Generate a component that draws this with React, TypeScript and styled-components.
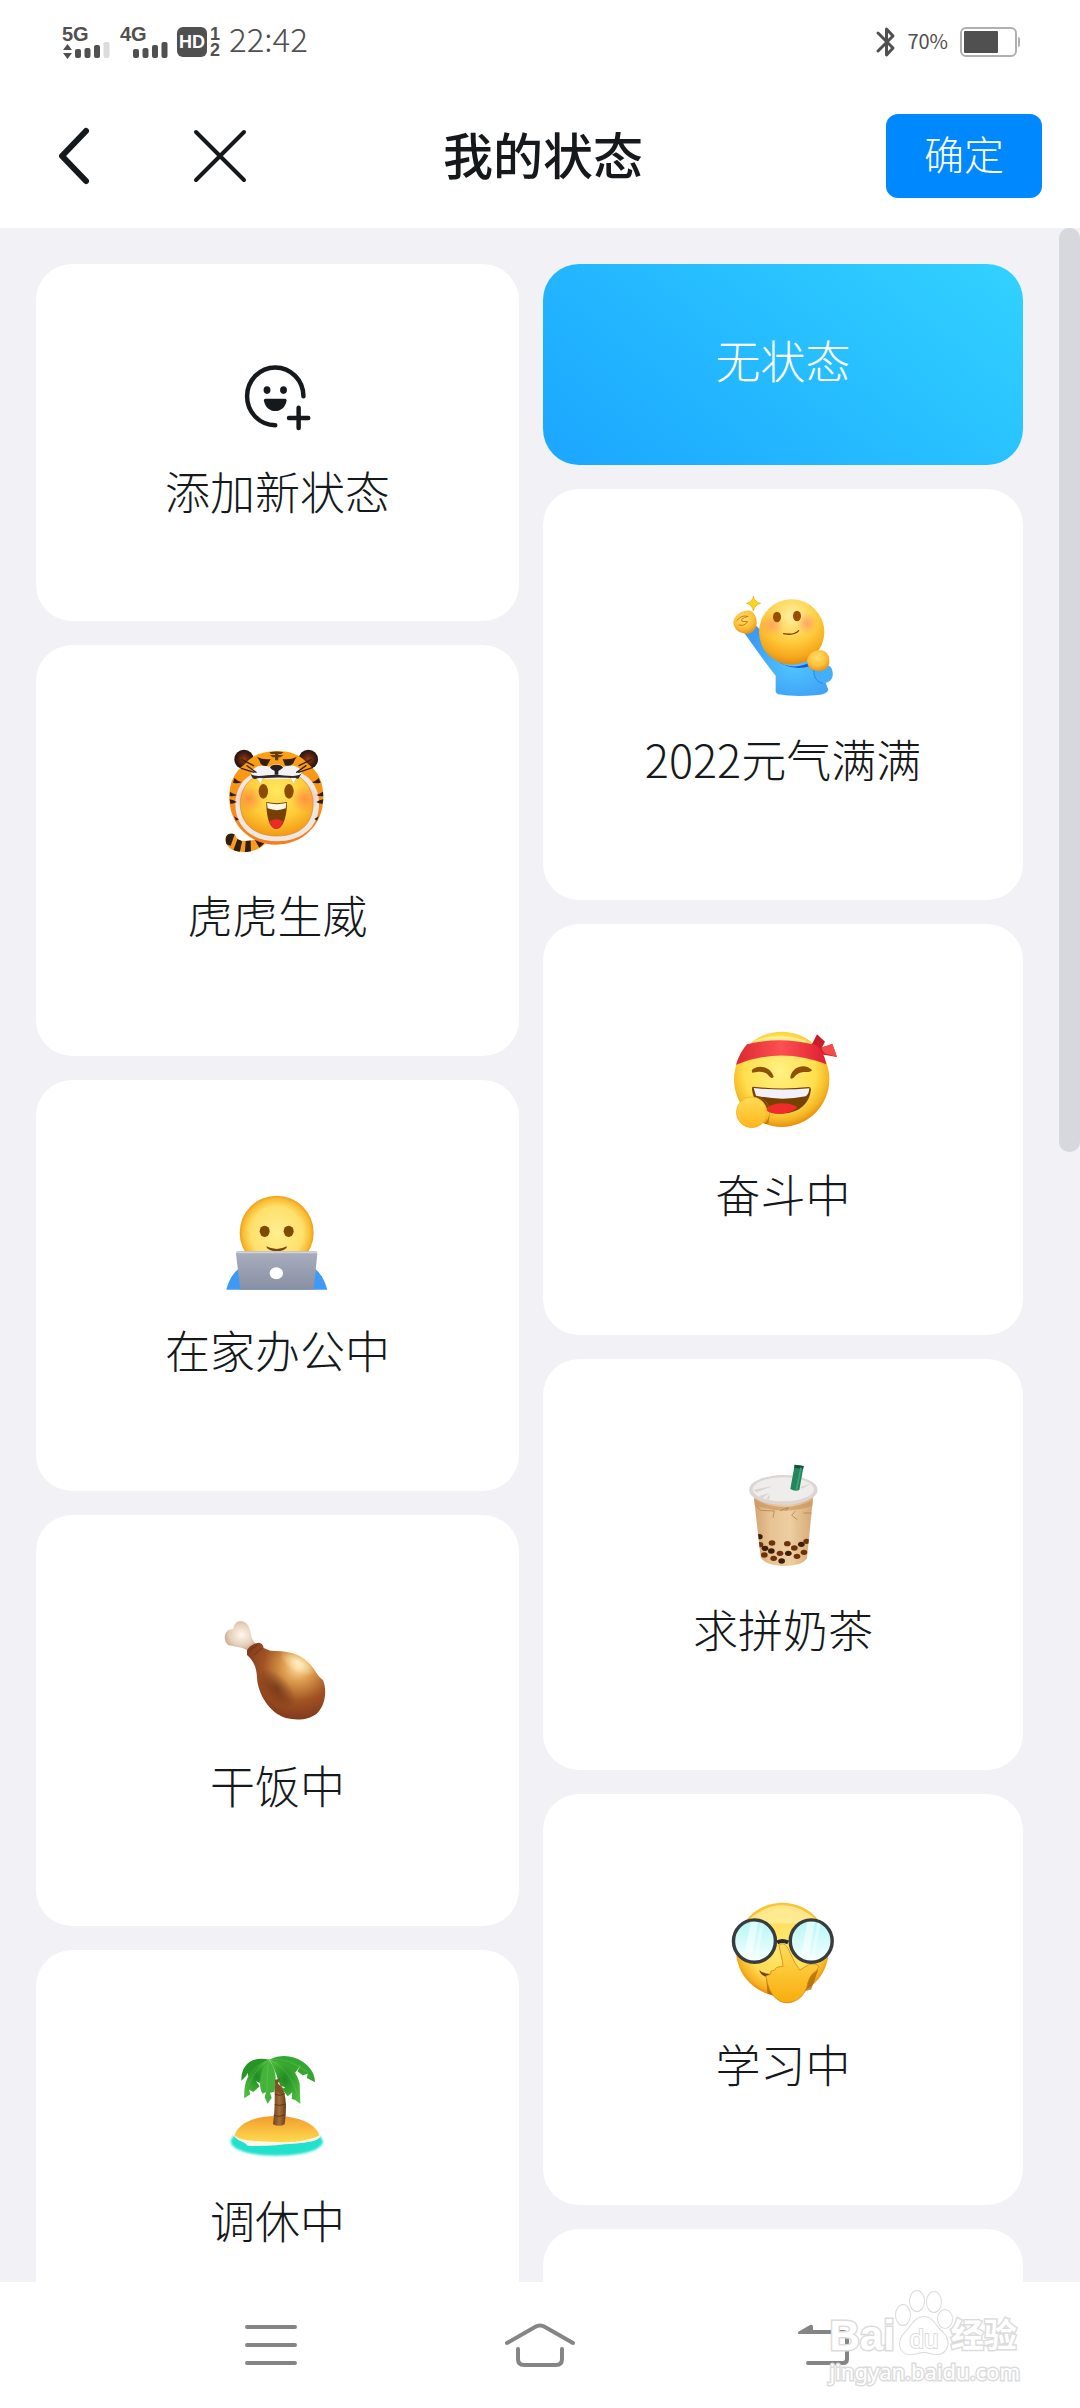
import React from "react";
import styled, { createGlobalStyle } from "styled-components";

const GlobalStyle = createGlobalStyle`
  * { box-sizing: border-box; }
  html, body { margin: 0; padding: 0; }
  body {
    background: #fff;
    color: #15191c;
    font-family: "Noto Sans CJK SC", "Liberation Sans", sans-serif;
  }
  button { font: inherit; color: inherit; border: 0; background: none; padding: 0; cursor: pointer; }
  svg { display: block; overflow: visible; }
`;

const Screen = styled.div`
  display: flex;
  flex-direction: column;
  height: 100vh;
  background: #fff;
`;

/* ---------- status bar ---------- */

const StatusBar = styled.div`
  display: flex;
  justify-content: space-between;
  align-items: center;
  height: 84px;
  padding: 0 60px 0 62px;
  color: #505050;
  font-family: "Liberation Sans", sans-serif;
  flex: none;
`;

const StatusGroup = styled.div<{ $gap: number }>`
  display: flex;
  align-items: center;
  gap: ${(p) => p.$gap}px;
`;

const Signal = styled.div<{ $width: number }>`
  display: flex;
  flex-direction: column;
  width: ${(p) => p.$width}px;
  font-size: 20px;
  line-height: 16px;
  font-weight: 700;
`;

const HdBadge = styled.span`
  display: grid;
  place-items: center;
  width: 30px;
  height: 30px;
  border-radius: 6px;
  background: #505050;
  color: #fff;
  font-size: 18px;
  line-height: 20px;
  font-weight: 700;
`;

const SimNumbers = styled.span`
  display: grid;
  width: 12px;
  font-size: 18px;
  line-height: 16px;
  font-weight: 700;
  text-align: center;
`;

const Clock = styled.time`
  font-family: "Noto Sans CJK SC", sans-serif;
  font-size: 33px;
  line-height: 36px;
  font-weight: 300;
  padding: 0 0 8px 6px;
`;

const BatteryText = styled.span`
  font-family: "Noto Sans CJK SC", sans-serif;
  font-size: 20px;
  line-height: 28px;
  padding-bottom: 2px;
`;

/* ---------- header ---------- */

const Header = styled.header`
  display: grid;
  grid-template-columns: 1fr auto 1fr;
  align-items: center;
  height: 144px;
  padding: 0 38px 0 44px;
  flex: none;
`;

const HeaderActions = styled.div`
  display: flex;
  gap: 86px;
`;

const IconButton = styled.button`
  display: grid;
  place-items: center;
  width: 60px;
  height: 60px;
`;

const Title = styled.h1`
  margin: 0;
  padding-bottom: 6px;
  font-size: 50px;
  line-height: 64px;
  font-weight: 500;
`;

const ConfirmButton = styled.button`
  justify-self: end;
  width: 156px;
  height: 84px;
  padding-bottom: 6px;
  border-radius: 12px;
  background: #0088ff;
  color: #fff;
  font-size: 40px;
  line-height: 56px;
  font-weight: 300;
`;

/* ---------- status list ---------- */

const Content = styled.main`
  display: flex;
  flex: 1;
  min-height: 0;
  background: #f1f1f6;
`;

const Scroller = styled.div`
  display: grid;
  grid-template-columns: 483fr 480fr;
  gap: 24px;
  align-items: start;
  flex: 1;
  overflow: hidden auto;
  scrollbar-width: none;
  padding: 36px 36px 0;
`;

const Column = styled.div`
  display: flex;
  flex-direction: column;
  gap: 24px;
`;

const Rail = styled.div`
  width: 21px;
  flex: none;
`;

const Thumb = styled.div`
  height: 45%;
  border-radius: 10px;
  background: #d7d8dd;
`;

const Card = styled.button<{ $compact?: boolean }>`
  display: flex;
  flex-direction: column;
  align-items: center;
  gap: 28px;
  width: 100%;
  min-height: ${(p) => (p.$compact ? 357 : 411)}px;
  padding: ${(p) => (p.$compact ? "101px 0 99px" : "102px 0 110px")};
  border-radius: 36px;
  background: #fff;
`;

const NoStatusCard = styled(Card)`
  min-height: 201px;
  padding: 64px 0 74px;
  background: linear-gradient(38deg, #1ca8ff 5%, #26bcff 50%, #31d1ff 98%);
  color: #fff;
`;

const Label = styled.span`
  font-size: 45px;
  line-height: 63px;
  font-weight: 300;
`;

/* ---------- navigation bar ---------- */

const NavBar = styled.nav`
  position: relative;
  display: flex;
  justify-content: space-between;
  align-items: center;
  height: 126px;
  padding: 0 208px 0 238px;
  background: #fff;
  flex: none;
`;

const NavButton = styled.button<{ $wide?: boolean }>`
  display: grid;
  place-items: center;
  width: ${(p) => (p.$wide ? 96 : 66)}px;
  height: 80px;
`;

const Watermark = styled.div`
  position: absolute;
  right: 60px;
  bottom: 22px;
  display: flex;
  flex-direction: column;
  align-items: flex-start;
  color: #fff;
  -webkit-text-stroke: 3px #dcdcdc;
  paint-order: stroke fill;
  pointer-events: none;
`;

const WatermarkLogo = styled.div`
  display: flex;
  align-items: flex-end;
`;

const WatermarkWord = styled.span<{ $size: number }>`
  font-family: "Liberation Sans", "Noto Sans CJK SC", sans-serif;
  font-size: ${(p) => p.$size}px;
  line-height: 40px;
  font-weight: 700;
`;

const WatermarkSite = styled.span`
  font-family: "Noto Sans", sans-serif;
  font-size: 22px;
  line-height: 30px;
`;

/* ---------- drawings ---------- */

const SignalBars = ({ tops, faded, arrows }: { tops: number[]; faded?: boolean; arrows?: boolean }) => (
  <svg width="48" height="17" viewBox="0 0 48 17" aria-hidden="true">
    {arrows && <path d="M1 8 5.500 2 10 8ZM1 11h9L5.500 17Z" fill="#505050" />}
    {tops.map((top, i) => (
      <rect key={i} x={13 + i * 9.500} y={top} width="6" height={16 - top} rx="2"
        fill={faded && i === 3 ? "#dcdcdc" : "#505050"} />
    ))}
  </svg>
);

const Bluetooth = () => (
  <svg width="19" height="30" viewBox="0 0 19 30" aria-hidden="true" fill="none" stroke="#505050" strokeWidth="3" strokeLinecap="round" strokeLinejoin="round">
    <path d="M2 6 17 21 10.500 28V2L17 9 2 24" />
  </svg>
);

const Battery = () => (
  <svg width="60" height="30" viewBox="0 0 60 30" aria-hidden="true">
    <rect x="1" y="1" width="55" height="28" rx="5" fill="#fff" stroke="#b0b0b0" strokeWidth="2" />
    <rect x="4" y="4" width="34" height="22" rx="1" fill="#505050" />
    <path d="M58 10q2 0 2 2v6q0 2-2 2z" fill="#b0b0b0" />
  </svg>
);

const AddIcon = () => (
  <svg width="66" height="66" viewBox="713 377 192 192" preserveAspectRatio="none" aria-hidden="true" fill="none" stroke="#15191c" strokeWidth="13" strokeLinecap="round">
    <path d="M883 468A82 84 0 1 0 801 552" />
    <path d="M869 501v59M841 531h56" />
    <g fill="#15191c" stroke="none">
      <ellipse cx="777" cy="450" rx="10" ry="11" />
      <ellipse cx="825" cy="450" rx="10" ry="11" />
      <path d="M772 475h58q4 0 4 5c-3 20-18 31-33 31s-30-11-33-31q0-5 4-5z" />
    </g>
  </svg>
);

const Emoji = ({ box, children }: { box: string; children: React.ReactNode }) => (
  <svg width="108" height="108" viewBox={box} preserveAspectRatio="none" aria-hidden="true">{children}</svg>
);

const Energetic = () => (
  <Emoji box="330 93 324 324">
    <defs>
      <radialGradient id="enFace" cx=".5" cy=".25" r=".75">
        <stop offset="0" stopColor="#fff0a0" /><stop offset=".55" stopColor="#ffcb3c" /><stop offset=".85" stopColor="#f5a81c" /><stop offset="1" stopColor="#e38a10" />
      </radialGradient>
      <radialGradient id="enBody" cx=".6" cy=".55" r=".6">
        <stop offset="0" stopColor="#52c6ff" /><stop offset="1" stopColor="#3b9cf5" />
      </radialGradient>
      <radialGradient id="enFist" cx=".45" cy=".35" r=".7">
        <stop offset="0" stopColor="#ffe070" /><stop offset=".6" stopColor="#fdbf35" /><stop offset="1" stopColor="#e58c15" />
      </radialGradient>
      <radialGradient id="enBlush"><stop offset="0" stopColor="#fb9060" stopOpacity=".7" /><stop offset="1" stopColor="#fb9060" stopOpacity="0" /></radialGradient>
    </defs>
    <path d="M376 219 409 196Q428 206 436 245L480 290Q530 310 590 300L620 340V368L628 389Q625 402 595 405 530 412 478 403 470 400 470 394V347Q440 310 376 219Z" fill="url(#enBody)" />
    <path d="M586 325C600 310 632 308 639 328 646 350 638 368 613 370 594 370 582 352 586 325Z" fill="#45aefb" />
    <path d="M468 298Q515 335 570 308L575 318Q515 336 468 298Z" fill="#1a55e0" />
    <path d="M584 330Q584 365 612 370" fill="none" stroke="#2d88e2" strokeWidth="3" />
    <circle cx="518" cy="216" r="98" fill="url(#enFace)" />
    <circle cx="459" cy="195" r="36" fill="url(#enBlush)" />
    <circle cx="564" cy="190" r="32" fill="url(#enBlush)" />
    <ellipse cx="474" cy="171" rx="12" ry="16" fill="#985000" />
    <ellipse cx="534" cy="168" rx="12" ry="16" fill="#985000" />
    <path d="M494 221Q526 227 539 212" fill="none" stroke="#70420a" strokeWidth="4" strokeLinecap="round" />
    <path d="M343 188C345 166 368 150 392 152 405 155 413 170 413 190 412 207 400 222 384 221 365 220 346 212 343 188Z" fill="url(#enFist)" />
    <path d="M354 181Q368 163 386 169M387 169Q362 176 369 184L386 185Q375 200 360 195" fill="none" stroke="#c77a14" strokeWidth="3" strokeLinecap="round" />
    <path d="M565 298C570 276 590 269 607 271 626 274 632 290 631 305 630 323 617 334 596 333 572 330 562 318 565 298Z" fill="url(#enFist)" />
    <path d="M403 108Q407 127 425 130 408 134 403 153 400 134 382 130 400 127 403 108Z" fill="#ffd21e" stroke="#eda81c" strokeWidth="2" />
  </Emoji>
);

const Tiger = () => (
  <Emoji box="191 81 324 324">
    <defs>
      <radialGradient id="tgFace" cx=".5" cy=".3" r=".7">
        <stop offset="0" stopColor="#ffe95e" /><stop offset=".6" stopColor="#ffcb36" /><stop offset="1" stopColor="#f39a16" />
      </radialGradient>
      <linearGradient id="tgHood" x1="0" y1="0" x2="0" y2="1"><stop offset="0" stopColor="#fca211" /><stop offset="1" stopColor="#f67d1b" /></linearGradient>
      <radialGradient id="tgEar"><stop offset="0" stopColor="#9a3c10" /><stop offset=".5" stopColor="#58240f" /><stop offset="1" stopColor="#201313" /></radialGradient>
      <radialGradient id="tgBlush"><stop offset="0" stopColor="#ff7446" stopOpacity=".65" /><stop offset="1" stopColor="#ff7446" stopOpacity="0" /></radialGradient>
      <clipPath id="tgTail"><path d="M196 354C200 337 224 337 227 350 235 370 275 362 299 356L314 372C285 399 250 398 229 394 208 388 193 374 196 354Z" /></clipPath>
    </defs>
    <g clipPath="url(#tgTail)">
      <path d="M190 330H320V400H190Z" fill="#fb9920" />
      <path d="M190 335H226L211 377 190 370ZM234 350 245 365 238 398 219 391ZM257 355H271L272 400H253ZM281 355 296 350 312 370 297 383Z" fill="#30200e" />
    </g>
    <circle cx="251" cy="118" r="29" fill="url(#tgEar)" /><circle cx="444" cy="118" r="29" fill="url(#tgEar)" />
    <path d="M348 93C390 92 421 105 443 132 477 157 489 190 489 232 489 315 427 374 348 374S207 315 207 232C207 190 220 157 254 132 275 105 306 94 348 93Z" fill="url(#tgHood)" />
    <path d="M350 145C432 144 476 187 476 253 476 326 419 364 350 364S225 326 225 253C225 187 270 146 350 145Z" fill="#eee8e5" />
    <path d="M350 154C420 154 458 195 458 252 458 313 416 348 350 348S240 313 240 252C240 195 280 154 350 154Z" fill="url(#tgFace)" stroke="#d88a2a" strokeWidth="2" />
    <circle cx="267" cy="237" r="42" fill="url(#tgBlush)" /><circle cx="433" cy="237" r="42" fill="url(#tgBlush)" />
    <path d="M272 156Q290 129 326 140 348 126 370 140 408 129 425 154L417 173Q348 183 278 173Z" fill="#f4f2f4" />
    <path d="M272 162C285 174 326 163 348 164S412 174 424 160L414 176Q348 168 282 177 273 173 272 162Z" fill="#30272a" />
    <path d="M329 143Q331 134 348 134T368 143Q361 149 354 153V164H343V153Q334 149 329 143Z" fill="#28201f" />
    <path d="M290 111Q309 120 331 117L320 137Q308 140 301 131L297 121ZM409 111Q390 120 367 117L374 136Q389 141 399 130L403 120Z" fill="#34200f" />
    <path d="M327 97Q348 92 370 97L363 102H332ZM328 106Q348 102 370 106L360 112H338ZM344 96h10v25h-10Z" fill="#643b0a" />
    <path d="M245 119 280 137M260 137 287 157M243 145 281 157M452 119 416 137M437 137 409 157M456 143 415 157" stroke="#35210f" strokeWidth="4" strokeLinecap="round" />
    <path d="M289 175 301 192 307 174ZM391 174 399 192 408 174Z" fill="#fff" stroke="#cbb777" strokeWidth="1" />
    <path d="M222 174Q230 183 244 186 232 193 218 188ZM209 216Q219 222 230 225 218 230 208 228ZM208 238Q220 240 229 246 219 252 210 251ZM221 289 236 298 227 302ZM475 174Q467 183 455 186 464 193 481 188ZM488 215Q477 222 468 225 479 230 489 228ZM489 238Q476 240 468 246 477 252 487 251ZM475 289 462 297 470 302Z" fill="#302019" />
    <ellipse cx="309" cy="214" rx="14" ry="22" fill="#8b4b00" /><ellipse cx="386" cy="214" rx="14" ry="22" fill="#8b4b00" />
    <path d="M318 246Q349 253 380 246C380 283 371 326 348 327 325 325 318 283 318 246Z" fill="#754000" />
    <path d="M320 249Q349 256 378 249L376 265Q349 276 322 265Z" fill="#fff8e8" />
    <path d="M327 304Q348 292 369 304 361 326 348 327 335 326 327 304Z" fill="#ee2929" />
  </Emoji>
);

const Striving = () => (
  <Emoji box="207 78 324 324">
    <defs>
      <radialGradient id="stFace" cx=".48" cy=".42" r=".58"><stop offset="0" stopColor="#fff184" /><stop offset=".65" stopColor="#ffdf4c" /><stop offset=".87" stopColor="#f6b928" /><stop offset="1" stopColor="#e8900a" /></radialGradient>
      <linearGradient id="stBand"><stop offset="0" stopColor="#dc2830" /><stop offset=".5" stopColor="#fd5052" /><stop offset="1" stopColor="#df1f31" /></linearGradient>
      <linearGradient id="stHand" x1="0" y1="0" x2="0" y2="1"><stop offset="0" stopColor="#ffdc57" /><stop offset="1" stopColor="#ffb61c" /></linearGradient>
    </defs>
    <circle cx="365" cy="238" r="143" fill="url(#stFace)" />
    <path d="M276 125Q362 90 451 128 365 117 276 125Z" fill="#fff0a0" opacity=".8" />
    <path d="M455 134 471 103 495 125 486 142 517 132 531 171 483 163Z" fill="#c91d2c" />
    <path d="M483 143 517 132 531 171 493 160Z" fill="#f34b4b" />
    <path d="M261 133Q360 108 466 135 489 144 499 193 364 139 228 194 240 156 261 133Z" fill="url(#stBand)" />
    <path d="M275 211C292 191 333 199 341 231 328 244 331 210 290 216L277 218ZM391 231C396 199 437 188 456 210 450 224 424 204 401 233Q391 240 391 231Z" fill="#8e5100" />
    <path d="M280 260Q362 270 447 261 455 262 452 274C446 317 410 341 364 341S284 319 276 269Q275 259 280 260Z" fill="#764200" />
    <path d="M281 264Q364 273 448 265 447 283 437 289 363 304 288 287Z" fill="#f2f0fc" />
    <path d="M315 329C332 306 386 303 412 322 389 345 340 348 315 329Z" fill="#f02c2b" />
    <path d="M294 291C331 305 337 350 313 372L325 371Q335 320 320 306 308 292 294 291Z" fill="#a96300" opacity=".65" />
    <circle cx="275" cy="337" r="46" fill="url(#stHand)" stroke="#f5aa1d" strokeWidth="2" />
  </Emoji>
);

const HomeOffice = () => (
  <Emoji box="191 66 324 324">
    <defs>
      <radialGradient id="hoFace" cx=".5" cy=".5" r=".51"><stop offset="0" stopColor="#ffee91" /><stop offset=".7" stopColor="#ffe06b" /><stop offset=".9" stopColor="#f9bb31" /><stop offset="1" stopColor="#ed9710" /></radialGradient>
      <linearGradient id="hoLaptop" x1="0" y1="0" x2="0" y2="1"><stop offset="0" stopColor="#a9afbf" /><stop offset="1" stopColor="#888fa2" /></linearGradient>
    </defs>
    <path d="M198 389C207 356 220 334 250 315H449C479 334 491 356 501 389Z" fill="#3d9bf7" />
    <circle cx="349" cy="218" r="111" fill="url(#hoFace)" />
    <ellipse cx="313" cy="214" rx="15" ry="17" fill="#7e4b04" /><ellipse cx="385" cy="214" rx="15" ry="17" fill="#7e4b04" />
    <path d="M318 259Q349 275 380 259C377 279 322 279 318 259Z" fill="#784807" />
    <path d="M232 274H467Q472 276 471 281L460 389H240L227 282Q227 275 232 274Z" fill="url(#hoLaptop)" />
    <path d="M229 277H470" stroke="#d1d3dc" strokeWidth="5" />
    <ellipse cx="348" cy="340" rx="20" ry="18" fill="#fff" />
  </Emoji>
);

const pearls = [[298, 350], [300, 374], [336, 369], [315, 385], [382, 371], [403, 384], [424, 373], [440, 364], [313, 405], [334, 393], [341, 415], [360, 400], [385, 400], [411, 409], [432, 397], [365, 423]];

const MilkTea = () => (
  <Emoji box="207 123 324 324">
    <defs>
      <linearGradient id="mtCup"><stop offset="0" stopColor="#cf9d69" /><stop offset=".3" stopColor="#e7c293" /><stop offset=".6" stopColor="#edcea1" /><stop offset="1" stopColor="#d3a36f" /></linearGradient>
      <clipPath id="mtClip"><path d="M281 225H460L441 415C425 446 320 446 302 412Z" /></clipPath>
    </defs>
    <g clipPath="url(#mtClip)">
      <path d="M270 210H470V450H270Z" fill="url(#mtCup)" />
      <path d="M275 235Q370 285 465 238V255Q370 291 275 252Z" fill="#c8955f" opacity=".65" />
      <path d="M290 258 301 271 343 273 339 293M360 272 385 263 378 272M413 300 395 286 406 273M430 279H458" fill="none" stroke="#a97847" strokeWidth="2" />
      {pearls.map(([x, y], i) => <ellipse key={i} cx={x} cy={y} rx="10" ry="8" fill={i % 3 ? "#6e310a" : "#3f1e0c"} />)}
    </g>
    <ellipse cx="370" cy="210" rx="103" ry="45" fill="#dcd5d3" />
    <ellipse cx="370" cy="208" rx="92" ry="36" fill="#efedec" />
    <path d="M281 209 340 198 289 217ZM297 229 329 218 307 235ZM421 201 451 191 427 206ZM318 236 331 223 327 239Z" fill="#d9d4d1" />
    <path d="M404 134 431 138 418 210Q404 215 391 207Z" fill="#24865b" />
    <path d="M404 134 431 138 429 147 403 143Z" fill="#115039" />
    <path d="M423 143 409 210" stroke="#3ba47a" strokeWidth="5" />
  </Emoji>
);

const Drumstick = () => (
  <Emoji box="191 111 324 324">
    <defs>
      <radialGradient id="dsMeat" cx=".65" cy=".32" r=".68"><stop offset="0" stopColor="#ffdfa1" /><stop offset=".28" stopColor="#dc9b4d" /><stop offset=".65" stopColor="#a15322" /><stop offset="1" stopColor="#823a1d" /></radialGradient>
      <radialGradient id="dsDark"><stop offset="0" stopColor="#57220f" stopOpacity=".6" /><stop offset="1" stopColor="#57220f" stopOpacity="0" /></radialGradient>
      <radialGradient id="dsShine"><stop offset="0" stopColor="#fff4cf" stopOpacity=".9" /><stop offset="1" stopColor="#ffe7ab" stopOpacity="0" /></radialGradient>
      <radialGradient id="dsBone" cx=".5" cy=".45" r=".6"><stop offset="0" stopColor="#fff8ed" /><stop offset=".6" stopColor="#e6cfba" /><stop offset="1" stopColor="#bd9a80" /></radialGradient>
    </defs>
    <path d="M294 198C270 181 274 162 267 144 257 116 221 118 219 147 190 147 186 181 204 195 226 201 247 200 266 214Z" fill="url(#dsBone)" />
    <path d="M260 211Q269 193 295 188 308 189 310 204L330 212C376 213 417 218 443 247 463 264 469 288 488 300 500 328 496 375 472 398 449 419 411 423 376 414 326 397 294 344 290 294 289 263 281 244 260 225Z" fill="url(#dsMeat)" />
    <ellipse cx="350" cy="326" rx="72" ry="38" transform="rotate(48 350 326)" fill="url(#dsDark)" />
    <ellipse cx="413" cy="249" rx="62" ry="29" transform="rotate(30 413 249)" fill="url(#dsShine)" />
    <path d="M266 213 292 194M281 225 306 203" stroke="#702b12" strokeWidth="4" opacity=".5" />
  </Emoji>
);

const Studying = () => (
  <Emoji box="551 48 314 321">
    <defs>
      <radialGradient id="syFace" cx=".5" cy=".45" r=".56"><stop offset="0" stopColor="#ffe970" /><stop offset=".65" stopColor="#ffdc54" /><stop offset=".88" stopColor="#f6b323" /><stop offset="1" stopColor="#e78600" /></radialGradient>
      <linearGradient id="syLens" x1="0" y1="0" x2="0" y2="1"><stop offset="0" stopColor="#b3f7f6" /><stop offset="1" stopColor="#f6ffff" /></linearGradient>
      <linearGradient id="syHand" x1="0" y1="0" x2="0" y2="1"><stop offset="0" stopColor="#ffdd5a" /><stop offset="1" stopColor="#f8ac0b" /></linearGradient>
    </defs>
    <ellipse cx="706" cy="207" rx="135" ry="139" fill="url(#syFace)" />
    <path d="M610 116Q706 35 803 116L756 130H650Z" fill="#fff0a8" opacity=".7" />
    <path d="M659 289 663 338 678 344ZM811 266 790 326 771 331 782 289Z" fill="#a45e04" opacity=".7" />
    <path d="M639 268Q652 280 673 280L668 290Q644 288 639 268Z" fill="#70420a" />
    <path d="M696 194Q711 183 722 203L744 249 757 268 783 252Q807 246 812 258 811 267 796 277 781 293 778 318 766 353 738 362 710 373 686 351 666 334 658 286L672 280 673 271 682 269 690 260 708 257 706 240Z" fill="url(#syHand)" stroke="#c47c12" strokeWidth="2" strokeLinejoin="round" />
    {[625, 790].map((x) => (
      <g key={x}>
        <ellipse cx={x} cy="182" rx="61" ry="63" fill="url(#syLens)" stroke="#393c3f" strokeWidth="10" />
        <path d={`M${x - 11} 125H${x + 10}L${x - 8} 235 ${x - 30} 226Z`} fill="#fff" opacity=".55" />
        <path d={`M${x + 18} 126 ${x + 27} 130 ${x + 9} 232 ${x} 236Z`} fill="#fff" opacity=".4" />
      </g>
    ))}
    <path d="M691 186Q706 177 723 186" fill="none" stroke="#292a2c" strokeWidth="12" />
  </Emoji>
);

const Island = () => (
  <Emoji box="191 96 324 324">
    <defs>
      <radialGradient id="isLeaf" cx=".5" cy=".45" r=".6"><stop offset="0" stopColor="#1e8b23" /><stop offset="1" stopColor="#4fbd3d" /></radialGradient>
      <linearGradient id="isSand" x1="0" y1="0" x2="0" y2="1"><stop offset="0" stopColor="#f29c2c" /><stop offset="1" stopColor="#ffdd51" /></linearGradient>
      <linearGradient id="isTrunk"><stop offset="0" stopColor="#704620" /><stop offset=".5" stopColor="#a66b35" /><stop offset="1" stopColor="#654019" /></linearGradient>
      <filter id="isSoft" x="-10%" y="-10%" width="120%" height="130%"><feGaussianBlur stdDeviation="3" /></filter>
    </defs>
    <path d="M211 365Q213 347 231 344H468Q485 348 488 366C482 393 420 407 350 407S216 393 211 365Z" fill="#22e1cc" filter="url(#isSoft)" />
    <path d="M222 350C230 310 281 288 347 288S470 311 478 350C456 372 285 382 222 350Z" fill="url(#isSand)" />
    <path d="M221 345C240 366 300 363 347 366 400 369 454 361 479 345 484 360 447 368 400 371 355 373 316 381 262 377 256 366 227 364 221 345Z" fill="#f9faeb" />
    <path d="M342 197Q364 185 371 216 382 250 373 313 358 322 338 313 346 255 342 197Z" fill="url(#isTrunk)" />
    <path d="M344 223Q360 230 374 221M343 254Q358 259 376 252M340 286Q357 293 374 285" fill="none" stroke="#5c3816" strokeWidth="3" />
    <path d="M327 119C275 107 242 133 243 182L257 168 263 158 263 169 280 160Z" fill="#289427" />
    <path d="M329 118C277 133 248 174 252 235L270 223 266 209 279 216 298 199 287 184 301 190Z" fill="url(#isLeaf)" />
    <path d="M323 118C297 154 294 203 307 221L317 216 313 232 322 251 334 233 329 218 341 216C351 180 348 143 323 118Z" fill="#45b33b" />
    <path d="M327 119C366 101 398 108 425 124 451 141 464 163 464 187L440 174 442 161 427 166 411 154 422 134 405 158C378 143 354 133 327 119Z" fill="#35a62f" />
    <path d="M327 119C372 125 408 142 418 191L420 251 404 240 394 237 396 217 382 229 365 207 375 202 360 197C350 173 345 147 327 119Z" fill="url(#isLeaf)" />
    <path d="M327 119C300 135 279 160 262 199M325 120Q319 168 320 217M331 121C365 137 395 170 410 220M327 118Q386 112 444 158" fill="none" stroke="#75d45c" strokeWidth="2" opacity=".55" />
    <path d="M344 180 361 174 353 190 370 215 362 222 345 212Z" fill="#815125" />
  </Emoji>
);

const MenuIcon = () => (
  <svg width="52" height="42" viewBox="0 0 52 42" aria-hidden="true" stroke="#858585" strokeWidth="4" strokeLinecap="round">
    <path d="M2 3H50M2 21H50M2 39H50" />
  </svg>
);

const HomeIcon = () => (
  <svg width="66" height="44" viewBox="2 0 66 44" aria-hidden="true" fill="none" stroke="#858585" strokeWidth="4" strokeLinecap="round" strokeLinejoin="round">
    <path d="M2 20 30 4Q35 1 40 4L68 20M13 26V36Q13 42 19 42H51Q57 42 57 36V26" />
  </svg>
);

const BackIcon = () => (
  <svg width="52" height="42" viewBox="0 0 52 42" aria-hidden="true" fill="none" stroke="#858585" strokeWidth="4" strokeLinecap="round">
    <path d="M10 8H45Q49 8 49 12V35Q49 39 45 39H10" />
    <path d="M0 8 12 1Q15 0 15 3V10H2Q-1 10 0 8Z" fill="#858585" stroke="none" />
  </svg>
);

const Paw = () => (
  <svg width="56" height="66" viewBox="0 0 56 66" aria-hidden="true" fill="#fff" stroke="#dcdcdc" strokeWidth="2">
    <ellipse cx="8" cy="25" rx="7" ry="10" /><ellipse cx="22" cy="11" rx="7" ry="10" />
    <ellipse cx="39" cy="12" rx="7" ry="10" /><ellipse cx="50" cy="29" rx="7" ry="9" />
    <path d="M29 27C38 27 40 36 47 42 57 51 52 64 42 64 36 64 34 62 29 62S20 65 14 64C4 63 2 51 10 43 17 36 20 27 29 27Z" />
    <text x="29" y="58" textAnchor="middle" fontSize="26" fontFamily="Liberation Sans, sans-serif">du</text>
  </svg>
);

/* ---------- data ---------- */

type Status = { label: string; icon: React.ReactNode };

const leftStatuses: Status[] = [
  { label: "虎虎生威", icon: <Tiger /> },
  { label: "在家办公中", icon: <HomeOffice /> },
  { label: "干饭中", icon: <Drumstick /> },
  { label: "调休中", icon: <Island /> },
];

const rightStatuses: Status[] = [
  { label: "2022元气满满", icon: <Energetic /> },
  { label: "奋斗中", icon: <Striving /> },
  { label: "求拼奶茶", icon: <MilkTea /> },
  { label: "学习中", icon: <Studying /> },
];

const StatusCard = ({ label, icon }: Status) => (
  <Card type="button">
    {icon}
    <Label>{label}</Label>
  </Card>
);

export default function App() {
  return (
    <>
      <GlobalStyle />
      <Screen>
        <StatusBar>
          <StatusGroup $gap={2}>
            <Signal $width={56}>5G<SignalBars tops={[7, 6, 3, 0]} faded arrows /></Signal>
            <Signal $width={55}>4G<SignalBars tops={[7, 6, 3, 0]} /></Signal>
            <HdBadge>HD</HdBadge>
            <SimNumbers><span>1</span><span>2</span></SimNumbers>
            <Clock>22:42</Clock>
          </StatusGroup>
          <StatusGroup $gap={12}>
            <Bluetooth />
            <BatteryText>70%</BatteryText>
            <Battery />
          </StatusGroup>
        </StatusBar>

        <Header>
          <HeaderActions>
            <IconButton type="button" aria-label="返回">
              <svg width="32" height="56" viewBox="0 0 32 56" fill="none" stroke="#15191c" strokeWidth="6" strokeLinecap="round" strokeLinejoin="round">
                <path d="M28 3 4 28 28 53" />
              </svg>
            </IconButton>
            <IconButton type="button" aria-label="关闭">
              <svg width="52" height="52" viewBox="0 0 52 52" fill="none" stroke="#15191c" strokeWidth="4" strokeLinecap="round">
                <path d="M2 2 50 50M50 2 2 50" />
              </svg>
            </IconButton>
          </HeaderActions>
          <Title>我的状态</Title>
          <ConfirmButton type="button">确定</ConfirmButton>
        </Header>

        <Content>
          <Scroller>
            <Column>
              <Card type="button" $compact>
                <AddIcon />
                <Label>添加新状态</Label>
              </Card>
              {leftStatuses.map((s) => <StatusCard key={s.label} {...s} />)}
            </Column>
            <Column>
              <NoStatusCard type="button"><Label>无状态</Label></NoStatusCard>
              {rightStatuses.map((s) => <StatusCard key={s.label} {...s} />)}
              <Card as="div" />
            </Column>
          </Scroller>
          <Rail><Thumb /></Rail>
        </Content>

        <NavBar>
          <NavButton type="button" aria-label="菜单"><MenuIcon /></NavButton>
          <NavButton type="button" aria-label="主页"><HomeIcon /></NavButton>
          <NavButton type="button" aria-label="后退" $wide><BackIcon /></NavButton>
          <Watermark>
            <WatermarkLogo>
              <WatermarkWord $size={42}>Bai</WatermarkWord>
              <Paw />
              <WatermarkWord $size={33}>经验</WatermarkWord>
            </WatermarkLogo>
            <WatermarkSite>jingyan.baidu.com</WatermarkSite>
          </Watermark>
        </NavBar>
      </Screen>
    </>
  );
}
